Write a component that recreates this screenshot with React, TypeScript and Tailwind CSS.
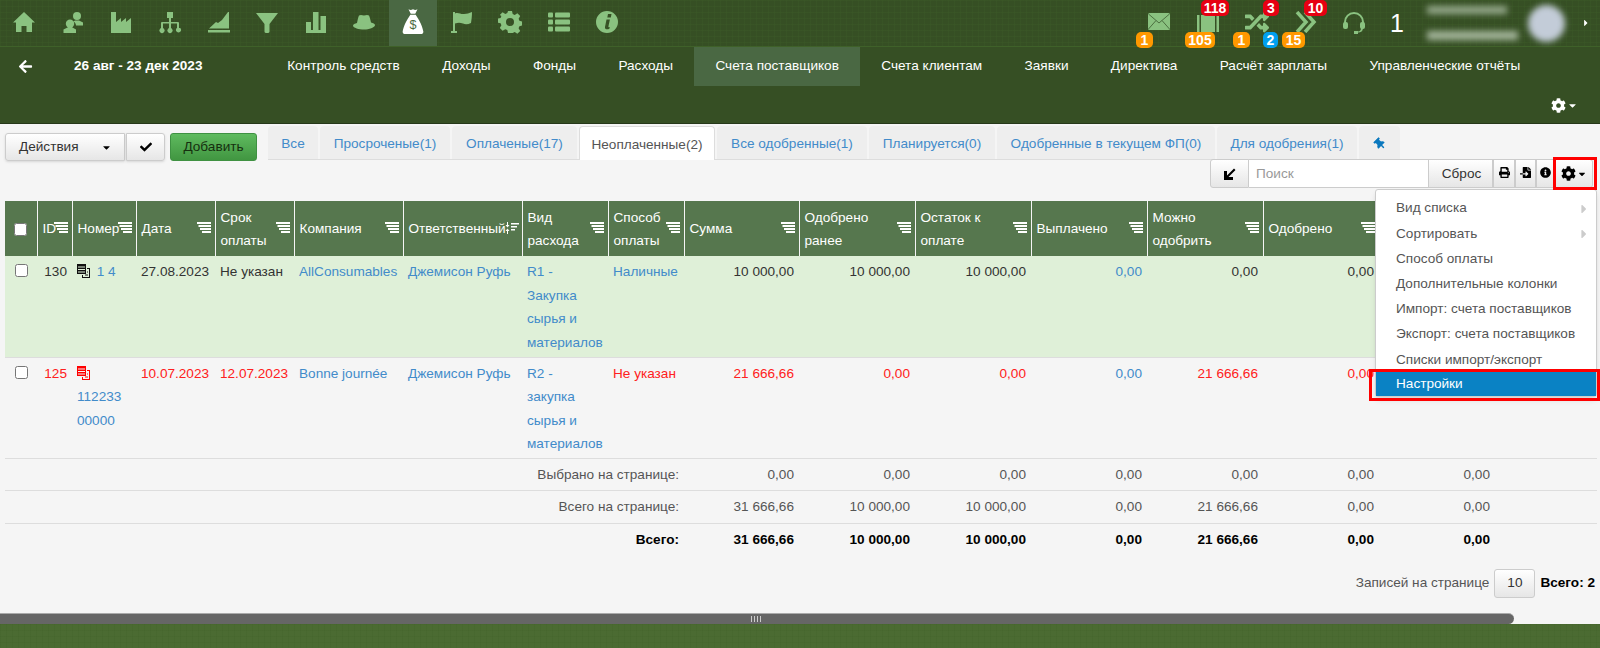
import {
  FaArrowLeft,
  FaCaretDown,
  FaCaretRight,
  FaCheck,
  FaCog,
  FaFileImport,
  FaInfoCircle,
  FaPrint,
  FaRandom,
  FaThumbtack,
} from "react-icons/fa";

const font = "font-['Liberation_Sans','Noto_Sans',sans-serif]";
const icon = "h-[24px] w-[24px] fill-[#8ac280]";
const texture =
  "bg-[linear-gradient(#41632b40_1px,transparent_1px),linear-gradient(90deg,#41632b40_1px,transparent_1px)] bg-[size:6px_6px]";

const topIcons = [
  <svg viewBox="0 0 24 24" className={icon}><path d="M12 2 23 12.500h-3V22h-5.500v-6h-5v6H4v-9.500H1z" /></svg>,
  <svg viewBox="0 0 24 24" className={icon}>
    <circle cx="16" cy="6" r="4" />
    <path d="M14 10.500h4l4 2v3h-7c0-2-1-3-2.500-4zM9 9.500a4.200 4.200 0 0 1 0 8.400 4.200 4.200 0 0 1 0-8.400zM6.500 17.500h5l3.500 2V23H2.500v-3.500z" />
  </svg>,
  <svg viewBox="0 0 24 24" className={icon}><path d="M2 2h5v10l5-4v4l5-4v4l5-4v15H2z" /></svg>,
  <svg viewBox="0 0 24 24" className={icon}>
    <path d="M9 2h6v6h-2v4h7a1 1 0 0 1 1 1v5h1.500v.5a2.500 2.500 0 1 1-4 0V18H19v-4.500h-6V18h.5v.5a2.500 2.500 0 1 1-3 0V18h.5v-4.500H5V18h.5v.5a2.500 2.500 0 1 1-3 0V18H3v-5a1 1 0 0 1 1-1h7V8H9z" />
  </svg>,
  <svg viewBox="0 0 24 24" className={icon}><path d="M2 18.500 9 12l2 1 4-3 6-8h1v16.500zM1 20h22v2.500H1z" /></svg>,
  <svg viewBox="0 0 24 24" className={icon}><path d="M1 3h22l-8.500 11v7.500c0 1-1 1.500-2.500 1.500s-2.500-.5-2.500-1.500V14z" /></svg>,
  <svg viewBox="0 0 24 24" className={icon}><path d="M2 12h5v8H2zM9 2h5.500v18H9zM16.500 6H22v14h-5.500zM2 20h20v3H2z" /></svg>,
  <svg viewBox="0 0 24 24" className={icon}><path d="M7 5.500c1.500-1 3-.5 5 0 2-.5 3.500-1 5 0 1 2 1.500 5 2 7 2 .5 4 1.500 4 2.500 0 2.500-6 4.500-11 4.500S1 18 1 15.500c0-1 2-2 4-2.500.5-2 1-5.500 2-7.500z" /></svg>,
  <svg viewBox="0 0 24 30" className="h-[27px] w-[22px]">
    <path fill="#fff" d="M7 1.500c2 .8 3 .8 5 0 2 .8 3 .8 5 0l-2.500 5h-5zM9 7.500h6l1.500 2.500c3 4 6 11 7 16 0 2-1 3-3 3H3.500c-2 0-3-1-3-3 1-5 4-12 7-16z" />
    <text x="12" y="23" textAnchor="middle" fontSize="14" fill="#4a6843" fontFamily="Liberation Sans">$</text>
  </svg>,
  <svg viewBox="0 0 24 24" className={icon}><path d="M3 2h2v1.500c3-1.500 6 1 9 .5 3 0 5-1 8-2 0 4-.5 8-1 11-3 1.500-6 1.500-8 .5-3-1-5-1-8 0V21h2v2H1v-2h2z" /></svg>,
  <svg viewBox="0 0 24 24" className={icon}>
    <path fillRule="evenodd" d="M10 1h4l.7 3 2 .9 2.700-1.600 2.800 2.800-1.600 2.700.8 2 3 .7v4l-3 .7-.8 2 1.600 2.700-2.800 2.800-2.700-1.600-2 .8L14 23h-4l-.7-3-2-.8-2.700 1.600-2.800-2.800 1.600-2.700-.8-2-3-.7v-4l3-.7.8-2L1.800 5.100l2.800-2.800 2.700 1.600 2-.9zM12 8a4 4 0 1 0 0 8 4 4 0 0 0 0-8z" />
  </svg>,
  <svg viewBox="0 0 24 24" className={icon}>
    <rect x="1" y="2.500" width="5" height="5" rx="1" /><rect x="8" y="2.500" width="15" height="5" rx="1" />
    <rect x="1" y="9.500" width="5" height="5" rx="1" /><rect x="8" y="9.500" width="15" height="5" rx="1" />
    <rect x="1" y="16.500" width="5" height="5" rx="1" /><rect x="8" y="16.500" width="15" height="5" rx="1" />
  </svg>,
  <svg viewBox="0 0 24 24" className={icon}>
    <path fillRule="evenodd" d="M12 1a11 11 0 1 1 0 22 11 11 0 0 1 0-22zM13 4l-.7 3.500h3.500L16.500 4zM11.500 9.500 10 17c-.5 2.500 2.500 3 4.500 1.500l.3-1.500c-1 .4-1.600.3-1.400-.4l1.500-7.100z" />
  </svg>,
];

const navItems = [
  "Контроль средств",
  "Доходы",
  "Фонды",
  "Расходы",
  "Счета поставщиков",
  "Счета клиентам",
  "Заявки",
  "Директива",
  "Расчёт зарплаты",
  "Управленческие отчёты",
];

const tabs = [
  { label: "Все", w: "w-[50px]" },
  { label: "Просроченые(1)", w: "w-[130px]" },
  { label: "Оплаченые(17)", w: "w-[125px]" },
  { label: "Неоплаченные(2)", w: "w-[136px]", active: true },
  { label: "Все одобренные(1)", w: "w-[150px]" },
  { label: "Планируется(0)", w: "w-[126px]" },
  { label: "Одобренные в текущем ФП(0)", w: "w-[218px]" },
  { label: "Для одобрения(1)", w: "w-[140px]" },
];

const columns = [
  { label: "ID", w: "w-[35px]" },
  { label: "Номер", w: "w-[64px]" },
  { label: "Дата", w: "w-[79px]" },
  { label: "Срок\nоплаты", w: "w-[79px]" },
  { label: "Компания", w: "w-[109px]" },
  { label: "Ответственный", w: "w-[119px]", sorted: true },
  { label: "Вид\nрасхода", w: "w-[86px]" },
  { label: "Способ\nоплаты", w: "w-[76px]" },
  { label: "Сумма", w: "w-[115px]" },
  { label: "Одобрено\nранее", w: "w-[116px]" },
  { label: "Остаток к\nоплате", w: "w-[116px]" },
  { label: "Выплачено", w: "w-[116px]" },
  { label: "Можно\nодобрить", w: "w-[116px]" },
  { label: "Одобрено", w: "w-[116px]" },
  { label: "", w: "w-[116px]" },
  { label: "", w: "w-[102px]" },
];

const totals = [
  { label: "Выбрано на странице:", values: ["0,00", "0,00", "0,00", "0,00", "0,00", "0,00", "0,00"] },
  { label: "Всего на странице:", values: ["31 666,66", "10 000,00", "10 000,00", "0,00", "21 666,66", "0,00", "0,00"] },
  { label: "Всего:", values: ["31 666,66", "10 000,00", "10 000,00", "0,00", "21 666,66", "0,00", "0,00"], bold: true },
];

const menu = [
  { label: "Вид списка", sub: true },
  { label: "Сортировать", sub: true },
  { label: "Способ оплаты" },
  { label: "Дополнительные колонки" },
  { label: "Импорт: счета поставщиков" },
  { label: "Экспорт: счета поставщиков" },
  { label: "Списки импорт/экспорт" },
];

const SortIcon = ({ sorted }: { sorted?: boolean }) =>
  sorted ? (
    <svg viewBox="0 0 14 12" className="absolute right-[3px] top-[21px] h-[12px] w-[14px] fill-white">
      <path d="M2 0h1v3h1.500L2.500 5.500.5 3H2zM2 12h1V9h1.500l-2-2.500L.5 9H2zM6 1h8v1.500H6zM6 4h6v1.500H6zM6 7h4v1.500H6z" />
    </svg>
  ) : (
    <svg viewBox="0 0 14 12" className="absolute right-[4px] top-[21px] h-[12px] w-[14px] fill-white">
      <path d="M0 0h14v2H0zM1.500 3H14v2H1.500zM3 6h11v2H3zM5 9h9v2H5z" />
    </svg>
  );

const DocIcon = ({ red }: { red?: boolean }) => (
  <svg viewBox="0 0 14 14" className={`inline-block h-[14px] w-[14px] align-[-2px] ${red ? "fill-[#ff0000]" : "fill-[#111]"}`}>
    <path fillRule="evenodd" d="M0 0h9v10H0zM1 2.500v1h7v-1zM1 5v1h7V5zM1 7.500v1h7v-1z" />
    <path d="M10 4h3v10H5v-3h1v2h6V5h-2zM8 11.500h3v-1H8zM10 8.500h1v-1h-1z" />
  </svg>
);

const Badge = ({ text, className }: { text: string; className: string }) => (
  <span className={`absolute flex h-[16px] items-center justify-center rounded-[5px] text-[14px] font-bold leading-none text-white ${className}`}>
    {text}
  </span>
);

const btn = "border border-[#ccc] bg-gradient-to-b from-white to-[#e6e6e6] text-[#333]";
const cell = "px-[5px] pt-[4px] align-top";
const right = "px-[5px] pt-[4px] text-right align-top";
const link = "text-[#428bca]";

export default function App() {
  return (
    <div className={`${font} flex h-[648px] w-[1600px] flex-col overflow-hidden bg-[#364f24] text-[13.600px] text-[#333]`}>
      {/* top icons */}
      <div className={`${texture} flex h-[47px] shrink-0 items-center justify-between border-b border-[#3f6129]`}>
        <div className="flex h-full">
          {topIcons.map((ic, i) => (
            <div
              key={i}
              className={`flex h-full w-[48.600px] items-center justify-center pb-[3px] ${i === 8 ? "bg-[#4a6843]" : ""}`}
            >
              {ic}
            </div>
          ))}
        </div>
        <div className="flex h-full w-[464px] items-center">
          <div className="relative h-full w-[48px]">
            <svg viewBox="0 0 22 17" className="absolute left-[12px] top-[13px] h-[17px] w-[22px]">
              <rect width="22" height="17" rx="1.500" fill="#8ac280" />
              <path d="M0.500 1 11 10 21.500 1M0.500 16 8 7.500M21.500 16 14 7.500" fill="none" stroke="#4c7040" strokeWidth="1" />
            </svg>
            <Badge text="1" className="left-0 top-[32px] w-[17px] bg-[#ff9800]" />
          </div>
          <div className="relative h-full w-[48px]">
            <svg viewBox="0 0 22 18" className="absolute left-[13px] top-[14px] h-[18px] w-[22px] fill-[#8ac280]">
              <path d="M0 1h2.500v17H0zM4 1h14v17H4zM19.500 1H22v17h-2.500z" />
            </svg>
            <Badge text="118" className="left-[17px] top-0 w-[28px] bg-[#e60012]" />
            <Badge text="105" className="left-[1px] top-[32px] w-[30px] bg-[#ff9800]" />
          </div>
          <div className="relative h-full w-[48px]">
            <FaRandom className="absolute left-[13px] top-[10px] text-[24px] text-[#8ac280]" />
            <Badge text="3" className="left-[31px] top-0 w-[16px] bg-[#e60012]" />
            <Badge text="1" className="left-[1px] top-[32px] w-[17px] bg-[#ff9800]" />
            <Badge text="2" className="left-[31px] top-[32px] w-[15px] bg-[#00a0f0]" />
          </div>
          <div className="relative h-full w-[48px]">
            <svg viewBox="0 0 22 22" className="absolute left-[15px] top-[11px] h-[22px] w-[22px] fill-none stroke-[#8ac280] stroke-[3.500]">
              <path d="M2 1 11 11 2 21M10 1 19 11 10 21" />
            </svg>
            <Badge text="10" className="left-[24px] top-0 w-[23px] bg-[#e60012]" />
            <Badge text="15" className="left-[2px] top-[32px] w-[23px] bg-[#ff9800]" />
          </div>
          <div className="flex h-full w-[48px] items-center justify-start pl-[15px]">
            <svg viewBox="0 0 22 22" className="h-[22px] w-[22px] fill-[#8ac280]">
              <path d="M11 0a10 10 0 0 1 10 10v3h-2v-3a8 8 0 0 0-16 0v3H1v-3A10 10 0 0 1 11 0z" />
              <rect x="0" y="10" width="5" height="7" rx="2" />
              <rect x="17" y="10" width="5" height="7" rx="2" />
              <path d="M18 16h2c0 3-2 4.500-5 4.500V22h-4v-3h4v.500c2 0 3-1.500 3-3.500z" />
            </svg>
          </div>
          <span className="w-[51px] pl-[14px] text-[25px] leading-none text-white">1</span>
          <div className="flex w-[101px] flex-col gap-[17px]">
            <div className="h-[8px] w-[80px] bg-[#94a78a] blur-[3px]" />
            <div className="h-[9px] w-[91px] bg-[#a3b49a] blur-[3px]" />
          </div>
          <div className="h-[37px] w-[37px] rounded-full bg-[#c3ccd8] blur-[3px]" />
          <FaCaretRight className="ml-[16px] text-[10px] text-white" />
        </div>
      </div>

      {/* nav */}
      <div className="flex h-[39px] shrink-0 items-center text-white">
        <div className="flex w-[74px] pl-[18px]">
          <FaArrowLeft className="text-[15px]" />
        </div>
        <div className="w-[192px] font-bold">26 авг - 23 дек 2023</div>
        <div className="flex h-full">
          {navItems.map((item) => (
            <div
              key={item}
              className={`flex h-full items-center px-[21.200px] ${item === "Счета поставщиков" ? "bg-[#4a6843]" : ""}`}
            >
              {item}
            </div>
          ))}
        </div>
      </div>

      {/* page gear */}
      <div className="flex h-[37px] shrink-0 items-center justify-end gap-[1px] pr-[22px] pt-[2px] text-white">
        <FaCog className="text-[15px]" />
        <FaCaretDown className="text-[11px]" />
      </div>

      {/* content */}
      <div className="relative flex h-[501px] shrink-0 flex-col border-t border-[#26381a] bg-[#f5f5f5] pl-[5px]">
        <div className="flex h-[36px] shrink-0 items-end">
          <div className={`${btn} mb-[-1px] flex h-[28px] w-[120px] items-center justify-between rounded-l-[3px] pl-[13px] pr-[12px] shadow-sm`}>
            Действия
            <FaCaretDown className="text-[11px] text-black" />
          </div>
          <div className={`${btn} mb-[-1px] ml-[1px] flex h-[28px] w-[39px] items-center justify-center rounded-r-[3px] shadow-sm`}>
            <FaCheck className="text-[12px] text-black" />
          </div>
          <div className="mb-[-1px] ml-[5px] flex h-[28px] w-[87px] items-center justify-center rounded-[3px] border border-[#3f9142] bg-gradient-to-b from-[#5fbb5f] to-[#419641] text-[#16300f]">
            Добавить
          </div>
          <div className="ml-[11px] flex h-[34px] items-stretch gap-[2px] self-end border-b border-[#ddd]">
            {tabs.map((t) => (
              <div
                key={t.label}
                className={`${t.w} flex items-center justify-center rounded-t-[4px] pt-[3px] ${
                  t.active
                    ? "mb-[-1px] border border-b-0 border-[#ddd] bg-white text-[#555]"
                    : `bg-[#eeeeee] ${link}`
                }`}
              >
                {t.label}
              </div>
            ))}
            <div className="flex w-[41px] items-center justify-center rounded-t-[4px] bg-[#eeeeee] pt-[3px] text-[#0a78be]">
              <FaThumbtack className="rotate-[-45deg] text-[12px]" />
            </div>
          </div>
        </div>

        <div className="flex h-[41px] shrink-0 justify-end pr-[7px]">
          <div className="-mt-[1px] flex h-[29px] text-[#555]">
            <div className={`${btn} flex w-[39px] items-center justify-center rounded-l-[3px]`}>
              <svg viewBox="0 0 14 14" className="h-[14px] w-[14px] fill-black">
                <path d="M1 13V4h3v4.500L11 1.500 12.500 3 5.500 10H10v3z" />
              </svg>
            </div>
            <div className="flex w-[179px] items-center border-y border-[#ccc] bg-white pl-[7px] pt-[1px] text-[#999]">Поиск</div>
            <div className={`${btn} flex w-[65px] items-center justify-center pl-[2px] pt-[1px]`}>Сброс</div>
            <div className={`${btn} flex w-[22px] items-center justify-center pb-[2px]`}>
              <FaPrint className="text-[11px] text-black" />
            </div>
            <div className={`${btn} flex w-[21px] items-center justify-center pb-[2px]`}>
              <FaFileImport className="text-[11px] text-black" />
            </div>
            <div className={`${btn} flex w-[18px] items-center justify-center pb-[2px]`}>
              <FaInfoCircle className="text-[11px] text-black" />
            </div>
            <div className={`${btn} flex w-[39px] items-center justify-center gap-[1px] rounded-r-[3px] text-black`}>
              <FaCog className="text-[15px]" />
              <FaCaretDown className="text-[10px]" />
            </div>
          </div>
        </div>

        <table className="w-[1592px] shrink-0 table-fixed border-collapse leading-[23.500px]">
          <colgroup>
            <col className="w-[32px]" />
            {columns.map((c, i) => (
              <col key={i} className={c.w} />
            ))}
          </colgroup>
          <thead>
            <tr className="h-[55px] bg-[#56774e] text-white">
              <th className="border-r border-[#f5f5f5] text-center align-middle">
                <input type="checkbox" className="h-[13px] w-[13px] align-middle" />
              </th>
              {columns.map((c, i) => (
                <th key={i} className="relative border-r border-[#f5f5f5] px-[5px] text-left align-middle font-normal leading-[23px]">
                  <span className="block whitespace-pre-line">{c.label}</span>
                  {c.label && <SortIcon sorted={c.sorted} />}
                </th>
              ))}
            </tr>
          </thead>
          <tbody>
            <tr className="h-[101px] border-b border-[#ddd] bg-[#dff0d8]">
              <td className="pl-[10px] pt-[8px] align-top"><input type="checkbox" className="block h-[13px] w-[13px]" /></td>
              <td className={right}>130</td>
              <td className={cell}><DocIcon /> <a className={`ml-[2px] ${link}`}>1 4</a></td>
              <td className={cell}>27.08.2023</td>
              <td className={cell}>Не указан</td>
              <td className={`${cell} whitespace-nowrap ${link}`}>AllConsumables</td>
              <td className={`${cell} ${link}`}>Джемисон Руфь</td>
              <td className={`${cell} whitespace-pre-line ${link}`}>{"R1 -\nЗакупка\nсырья и\nматериалов"}</td>
              <td className={`${cell} ${link}`}>Наличные</td>
              <td className={right}>10 000,00</td>
              <td className={right}>10 000,00</td>
              <td className={right}>10 000,00</td>
              <td className={`${right} ${link}`}>0,00</td>
              <td className={right}>0,00</td>
              <td className={right}>0,00</td>
              <td />
              <td />
            </tr>
            <tr className="h-[101px] border-b border-[#ddd] text-[#ff2020]">
              <td className="pl-[10px] pt-[8px] align-top"><input type="checkbox" className="block h-[13px] w-[13px]" /></td>
              <td className={right}>125</td>
              <td className={cell}><DocIcon red /><a className={`block ${link}`}>112233 00000</a></td>
              <td className={cell}>10.07.2023</td>
              <td className={cell}>12.07.2023</td>
              <td className={`${cell} whitespace-nowrap ${link}`}>Bonne journée</td>
              <td className={`${cell} ${link}`}>Джемисон Руфь</td>
              <td className={`${cell} whitespace-pre-line ${link}`}>{"R2 -\nзакупка\nсырья и\nматериалов"}</td>
              <td className={cell}>Не указан</td>
              <td className={right}>21 666,66</td>
              <td className={right}>0,00</td>
              <td className={right}>0,00</td>
              <td className={`${right} ${link}`}>0,00</td>
              <td className={right}>21 666,66</td>
              <td className={right}>0,00</td>
              <td />
              <td />
            </tr>
            {totals.map((row) => (
              <tr key={row.label} className={`h-[32.500px] border-b border-[#ddd] last:border-0 ${row.bold ? "font-bold text-black" : "text-[#555]"}`}>
                <td colSpan={9} className="px-[5px] text-right">{row.label}</td>
                {row.values.map((v, i) => (
                  <td key={i} className="px-[5px] text-right">{v}</td>
                ))}
                <td />
              </tr>
            ))}
          </tbody>
        </table>

        <div className="mt-[13px] flex shrink-0 items-center justify-end gap-[5px] pr-[5px] text-[#555]">
          <span>Записей на странице</span>
          <div className={`${btn} flex h-[29px] w-[41px] items-center justify-center rounded-[3px]`}>10</div>
          <span className="font-bold text-black">Всего: 2</span>
        </div>

        {/* horizontal scrollbar */}
        <div className="mt-auto -ml-[5px] flex h-[11px] w-[1514px] shrink-0 items-center justify-center rounded-r-full border-t border-[#aaa] bg-[#666]">
          <div className="h-[6px] w-[12px] bg-[repeating-linear-gradient(90deg,#ccc_0_1px,transparent_1px_3px)]" />
        </div>

        {/* settings dropdown */}
        <div className="absolute left-[1375px] top-[65px] w-[222px] rounded-[3px] border border-[#ccc] bg-white pt-[6px] shadow-md">
          {menu.map((m) => (
            <div key={m.label} className="flex h-[25.200px] items-center justify-between pl-[20px] pr-[5px] text-[#555]">
              {m.label}
              {m.sub && <FaCaretRight className="text-[14px] text-[#ccc]" />}
            </div>
          ))}
          <div className="flex h-[24px] items-center bg-[#0a82c4] pl-[20px] text-white">Настройки</div>
        </div>

        {/* red callouts */}
        <div className="absolute left-[1553px] top-[33px] h-[33px] w-[44px] border-[3px] border-[#ff0000]" />
        <div className="absolute left-[1369px] top-[245px] h-[32px] w-[231px] border-[3px] border-[#ff0000]" />
      </div>

      <div className={`${texture} flex-1 bg-[#4b6b32]`} />
    </div>
  );
}
